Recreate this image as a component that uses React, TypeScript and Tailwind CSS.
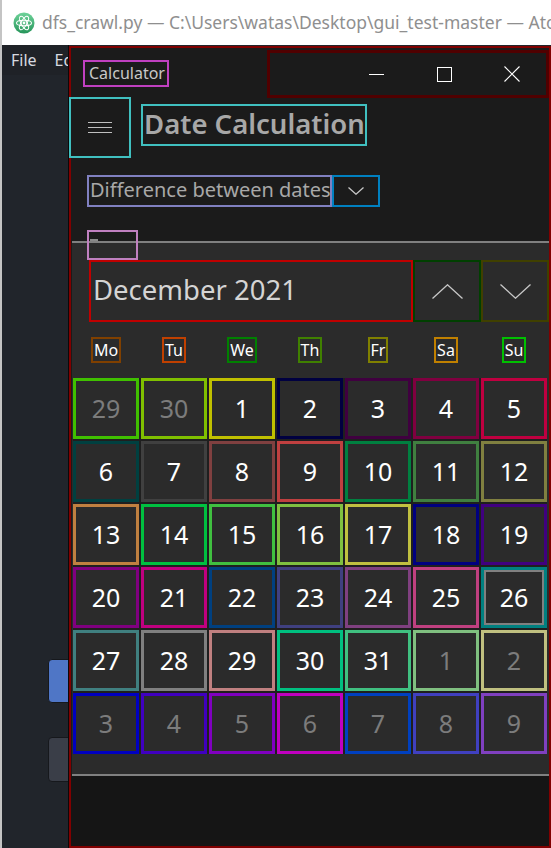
import React from "react";

type Day = { d: number; o?: boolean; c: string; today?: boolean };

// border colours follow the inspector overlay in the screenshot
const weekdays = [
  { t: "Mo", c: "border-[#804000]" },
  { t: "Tu", c: "border-[#c04000]" },
  { t: "We", c: "border-[#008000]" },
  { t: "Th", c: "border-[#408000]" },
  { t: "Fr", c: "border-[#808000]" },
  { t: "Sa", c: "border-[#c08000]" },
  { t: "Su", c: "border-[#00c000]" },
];

const days: Day[] = [
  { d: 29, o: true, c: "border-[#40c000]" },
  { d: 30, o: true, c: "border-[#80c000]" },
  { d: 1, c: "border-[#c0c000]" },
  { d: 2, c: "border-[#000040]" },
  { d: 3, c: "border-[#400040]" },
  { d: 4, c: "border-[#800040]" },
  { d: 5, c: "border-[#c00040]" },
  { d: 6, c: "border-[#004040]" },
  { d: 7, c: "border-[#404040]" },
  { d: 8, c: "border-[#804040]" },
  { d: 9, c: "border-[#c04040]" },
  { d: 10, c: "border-[#008040]" },
  { d: 11, c: "border-[#408040]" },
  { d: 12, c: "border-[#808040]" },
  { d: 13, c: "border-[#c08040]" },
  { d: 14, c: "border-[#00c040]" },
  { d: 15, c: "border-[#40c040]" },
  { d: 16, c: "border-[#80c040]" },
  { d: 17, c: "border-[#c0c040]" },
  { d: 18, c: "border-[#000080]" },
  { d: 19, c: "border-[#400080]" },
  { d: 20, c: "border-[#800080]" },
  { d: 21, c: "border-[#c00080]" },
  { d: 22, c: "border-[#004080]" },
  { d: 23, c: "border-[#404080]" },
  { d: 24, c: "border-[#804080]" },
  { d: 25, c: "border-[#c04080]" },
  { d: 26, c: "border-[#008080]", today: true },
  { d: 27, c: "border-[#408080]" },
  { d: 28, c: "border-[#808080]" },
  { d: 29, c: "border-[#c08080]" },
  { d: 30, c: "border-[#00c080]" },
  { d: 31, c: "border-[#40c080]" },
  { d: 1, o: true, c: "border-[#80c080]" },
  { d: 2, o: true, c: "border-[#c0c080]" },
  { d: 3, o: true, c: "border-[#0000c0]" },
  { d: 4, o: true, c: "border-[#4000c0]" },
  { d: 5, o: true, c: "border-[#8000c0]" },
  { d: 6, o: true, c: "border-[#c000c0]" },
  { d: 7, o: true, c: "border-[#0040c0]" },
  { d: 8, o: true, c: "border-[#4040c0]" },
  { d: 9, o: true, c: "border-[#8040c0]" },
];

function AtomLogo() {
  return (
    <svg className="shrink-0" width="22" height="22" viewBox="0 0 22 22">
      <defs>
        <linearGradient id="g" x1="0" y1="0" x2="0" y2="1">
          <stop offset="0" stopColor="#6fd39a" />
          <stop offset="1" stopColor="#26955a" />
        </linearGradient>
      </defs>
      <circle cx="11" cy="11" r="10.5" fill="url(#g)" />
      <g fill="none" stroke="#fff" strokeWidth="1.1">
        <ellipse cx="11" cy="11" rx="7.5" ry="2.8" />
        <ellipse cx="11" cy="11" rx="7.5" ry="2.8" transform="rotate(60 11 11)" />
        <ellipse cx="11" cy="11" rx="7.5" ry="2.8" transform="rotate(-60 11 11)" />
      </g>
      <circle cx="11" cy="11" r="1.4" fill="#fff" />
    </svg>
  );
}

function Chevron({ up, w, h }: { up?: boolean; w: number; h: number }) {
  return (
    <svg width={w} height={h} viewBox={`0 0 ${w} ${h}`} fill="none" stroke="#c8c8c8" strokeWidth="1.3">
      {up ? (
        <path d={`M0.5 ${h - 0.5} L${w / 2} 0.8 L${w - 0.5} ${h - 0.5}`} />
      ) : (
        <path d={`M0.5 0.5 L${w / 2} ${h - 0.8} L${w - 0.5} 0.5`} />
      )}
    </svg>
  );
}

export default function App() {
  return (
    <div className="flex h-[848px] w-[551px] flex-col overflow-hidden border-l-2 border-[#c4c4c4] bg-white font-['Noto_Sans',sans-serif]">
      {/* Atom window title */}
      <div className="flex h-[45px] shrink-0 items-center gap-[7px] overflow-hidden pl-[11px]">
        <AtomLogo />
        <span className="whitespace-nowrap text-[17.5px] text-[#8f8f8f]">
          dfs_crawl.py — C:\Users\watas\Desktop\gui_test-master — Atom
        </span>
      </div>

      <div className="flex flex-1 bg-[#21252b]">
        {/* Atom editor, mostly hidden behind the calculator */}
        <div className="flex w-[66px] shrink-0 flex-col overflow-hidden">
          <div className="flex h-[30px] items-center gap-[18px] whitespace-nowrap bg-[#1f2227] pl-[9px] text-[16px] text-[#d7dae0]">
            <span>File</span>
            <span>Edit</span>
          </div>
          <div className="ml-[46px] mt-[584px] h-[44px] w-[24px] rounded-[4px] border border-[#16181c] bg-[#4f76c6]" />
          <div className="ml-[46px] mt-[34px] h-[45px] w-[24px] rounded-[4px] border border-[#16181c] bg-[#3a3e48]" />
        </div>

        {/* Calculator window */}
        <div className="flex w-[483px] shrink-0 flex-col border-l border-[#0a0a0a] pt-[1px]">
          <div className="flex flex-1 flex-col border-2 border-[#800000] bg-[#1b1b1b]">
            {/* title bar */}
            <div className="flex h-[49px] shrink-0 items-start justify-between">
              <div className="ml-[12px] mt-[12px] h-[27px] w-[86px] whitespace-nowrap border-2 border-[#c040c0] pl-[4px] text-[16px] leading-[22px] text-[#c8c8c8]">
                Calculator
              </div>
              <div className="relative z-10 mt-[2px] flex h-[48px] w-[282px] items-center border-[3px] border-[#500000] pl-[72px]">
                <div className="flex w-[69px] justify-center">
                  <div className="h-px w-[15px] bg-white" />
                </div>
                <div className="flex w-[69px] justify-center">
                  <div className="h-[15px] w-[15px] border border-white" />
                </div>
                <div className="flex w-[69px] justify-center">
                  <svg width="16" height="16" viewBox="0 0 16 16" stroke="#fff" strokeWidth="1.1">
                    <path d="M0.5 0.5 L15.5 15.5 M15.5 0.5 L0.5 15.5" />
                  </svg>
                </div>
              </div>
            </div>

            {/* hamburger + heading */}
            <div className="flex shrink-0 items-start">
              <div className="-ml-[2px] flex h-[61px] w-[62px] flex-col items-center justify-center gap-[4px] border-2 border-[#40c0c0]">
                <div className="h-px w-[24px] bg-[#c0c0c0]" />
                <div className="h-px w-[24px] bg-[#c0c0c0]" />
                <div className="h-px w-[24px] bg-[#c0c0c0]" />
              </div>
              <div className="ml-[10px] mt-[7px] h-[42px] w-[226px] whitespace-nowrap border-2 border-[#40c0c0] pl-[1px] text-[27.5px] font-semibold leading-[36px] text-[#a8a8a8]">
                Date Calculation
              </div>
            </div>

            {/* mode dropdown */}
            <div className="ml-[16px] mt-[17px] flex h-[32px] shrink-0">
              <div className="w-[245px] whitespace-nowrap border-2 border-[#8080c0] pl-[1px] text-[20px] leading-[26px] text-[#a8a8a8]">
                Difference between dates
              </div>
              <div className="flex w-[48px] items-center justify-center border-2 border-[#0080c0]">
                <Chevron w={16} h={8} />
              </div>
            </div>

            {/* "From" label, mostly covered by the flyout */}
            <div className="relative z-10 -mb-[19px] ml-[16px] mt-[23px] h-[30px] w-[51px] shrink-0 border-2 border-[#c080c0]">
              <div className="ml-[1px] mt-[7px] h-[2px] w-[8px] bg-[#8a8a8a]" />
            </div>

            {/* calendar flyout */}
            <div className="ml-[1px] shrink-0 border-y-2 border-[#808080] bg-[#2b2b2b] pb-[20px] pt-[17px]">
              <div className="ml-[17px] flex h-[62px]">
                <div className="w-[324px] whitespace-nowrap border-2 border-[#c00000] pl-[2px] text-[27.5px] leading-[56px] text-[#d4d4d4]">
                  December 2021
                </div>
                <div className="flex w-[68px] items-center justify-center border-2 border-[#004000]">
                  <Chevron up w={31} h={15} />
                </div>
                <div className="flex w-[68px] items-center justify-center border-2 border-[#404000]">
                  <Chevron w={31} h={15} />
                </div>
              </div>

              <div className="mt-[15px] grid grid-cols-[repeat(7,66px)] justify-items-center gap-x-[2px] pl-[1px]">
                {weekdays.map((w) => (
                  <div key={w.t} className={`h-[26px] border-2 px-px text-[16px] leading-[22px] text-white ${w.c}`}>
                    {w.t}
                  </div>
                ))}
              </div>

              <div className="ml-[1px] mt-[15px] grid w-[474px] grid-cols-[repeat(7,66px)] gap-[2px] bg-[#1f1f1f]">
                {days.map((day, i) => (
                  <div
                    key={i}
                    className={`flex h-[61px] items-center justify-center border-[3px] bg-[#2b2b2b] text-[25px] ${day.c} ${
                      day.o ? "text-[#7c7c7c]" : "text-white"
                    } ${day.today ? "shadow-[inset_0_0_0_2px_#808080]" : ""}`}
                  >
                    {day.d}
                  </div>
                ))}
              </div>
            </div>

            <div className="flex-1 bg-[#151515]" />
          </div>
        </div>
      </div>
    </div>
  );
}
